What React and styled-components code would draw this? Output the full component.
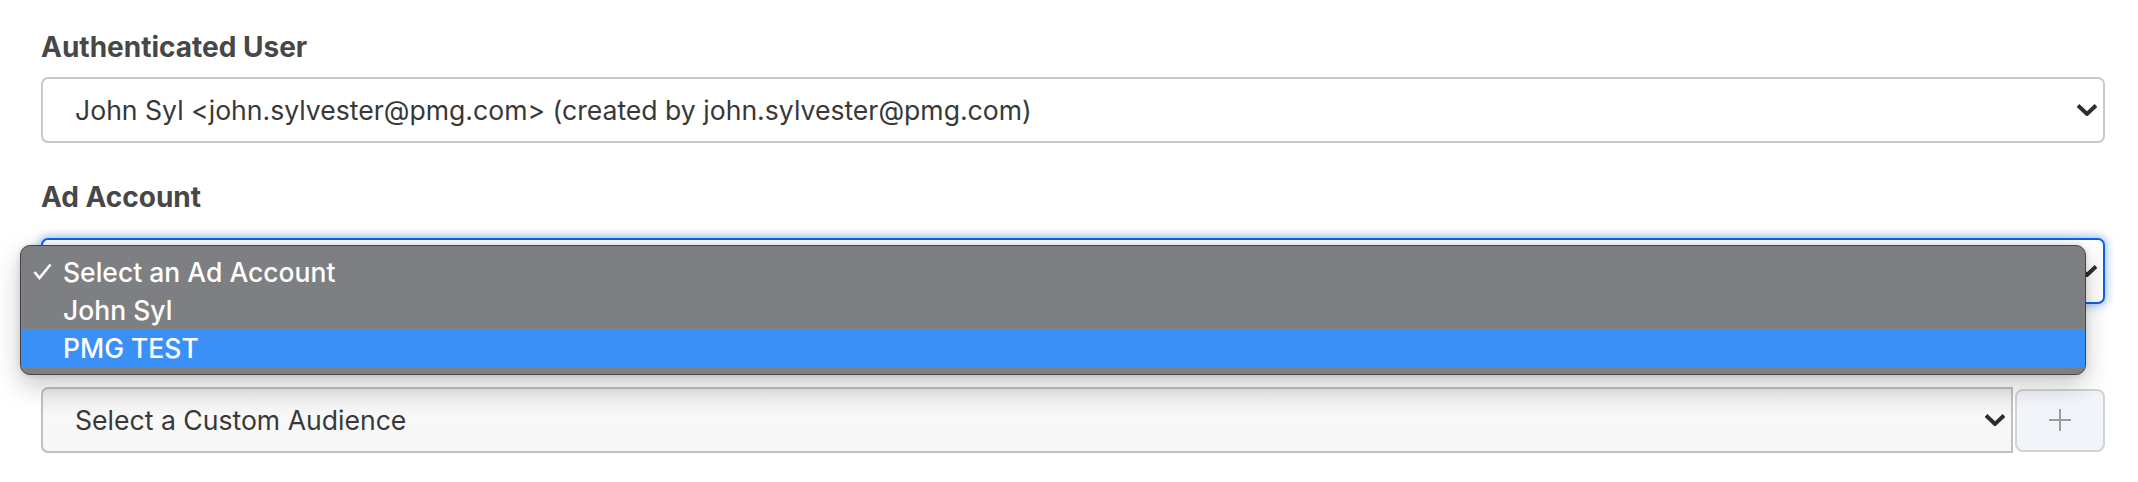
import React from "react";
import styled, { createGlobalStyle } from "styled-components";

const GlobalStyle = createGlobalStyle`
  html, body {
    margin: 0;
    padding: 0;
    background: #ffffff;
    overflow: hidden;
  }
  body {
    font-family: Inter, "Liberation Sans", Arial, sans-serif;
  }
`;

// Form column
const Page = styled.div`
  display: flex;
  flex-direction: column;
  gap: 37.5px;
  padding: 31px 33px 0 41px;
  width: 2138px;
  box-sizing: border-box;
`;

const Field = styled.div`
  display: flex;
  flex-direction: column;
`;

const Label = styled.div`
  font-size: 28px;
  line-height: 32px;
  font-weight: 700;
  color: #474747;
  margin-bottom: ${(p) => p.$gap || 14}px;
`;

const ControlWrap = styled.div`
  position: relative;
`;

const InputGroup = styled.div`
  display: flex;
  align-items: center;
  gap: 2px;
`;

// Select look-alike
const SelectBox = styled.div`
  flex: 1 1 auto;
  min-width: 0;
  display: flex;
  align-items: center;
  justify-content: space-between;
  height: 66px;
  box-sizing: border-box;
  padding: 0 6px 0 32px;
  border: 2px solid ${(p) => (p.$focused ? "#0d63e0" : p.$muted ? "#bfbfbf" : "#c9c9c9")};
  border-radius: ${(p) => (p.$attached ? "7px 0 0 7px" : "7px")};
  background: ${(p) =>
    p.$muted ? "linear-gradient(#ececec, #f8f8f8 45%, #f7f7f7)" : "#ffffff"};
  box-shadow: ${(p) => (p.$focused ? "0 0 9px 2px rgba(40, 120, 235, 0.45)" : "none")};
  font-size: 26.6px;
  color: #383838;
  white-space: nowrap;
`;

const Chevron = () => (
  <svg width="20" height="12" viewBox="0 0 20 12">
    <path d="M1 1.5 L10 10 L19 1.5" fill="none" stroke="#2e2e2e" strokeWidth="4" />
  </svg>
);

const AddButton = styled.div`
  flex: 0 0 90px;
  height: 63px;
  box-sizing: border-box;
  border: 2px solid #d3d3d3;
  border-radius: 8px;
  background: #f1f4f9;
  display: flex;
  align-items: center;
  justify-content: center;
`;

const Plus = () => (
  <svg width="24" height="24" viewBox="0 0 24 24">
    <path d="M12 1 V23 M1 12 H23" stroke="#9c9c9c" strokeWidth="2" />
  </svg>
);

// Native-style option menu laid over the focused select
const Menu = styled.div`
  position: absolute;
  top: 7px;
  left: -21px;
  width: 2066px;
  box-sizing: border-box;
  padding: 7px 0;
  background: #7e7f82;
  border: 1px solid #454545;
  border-radius: 10px;
  box-shadow: 0 10px 26px rgba(0, 0, 0, 0.22), 0 0 6px rgba(0, 0, 0, 0.12);
  z-index: 5;
`;

const Option = styled.div`
  display: flex;
  align-items: center;
  height: 38px;
  padding-left: 12px;
  background: ${(p) => (p.$active ? "#3b90f8" : "transparent")};
  color: #ffffff;
  font-size: 26.5px;
  font-weight: 500;
  line-height: 38px;
`;

const Check = styled.span`
  width: 30px;
  display: flex;
  align-items: center;
`;

const CheckMark = () => (
  <svg width="19" height="17" viewBox="0 0 19 17">
    <path d="M1.5 9 L6.5 15 L17.5 1.5" fill="none" stroke="#ffffff" strokeWidth="2.6" />
  </svg>
);

const options = [
  { label: "Select an Ad Account", checked: true },
  { label: "John Syl" },
  { label: "PMG TEST", active: true },
];

export default function App() {
  return (
    <>
      <GlobalStyle />
      <Page>
        <Field>
          <Label>Authenticated User</Label>
          <SelectBox>
            <span>John Syl &lt;john.sylvester@pmg.com&gt; (created by john.sylvester@pmg.com)</span>
            <Chevron />
          </SelectBox>
        </Field>

        <Field>
          <Label $gap={25}>Ad Account</Label>
          <ControlWrap>
            <SelectBox $focused>
              <span>Select an Ad Account</span>
              <Chevron />
            </SelectBox>
            <Menu>
              {options.map((o) => (
                <Option key={o.label} $active={o.active}>
                  <Check>{o.checked && <CheckMark />}</Check>
                  {o.label}
                </Option>
              ))}
            </Menu>
          </ControlWrap>
        </Field>

        <Field>
          <Label>Custom Audience</Label>
          <InputGroup>
            <SelectBox $muted $attached>
              <span>Select a Custom Audience</span>
              <Chevron />
            </SelectBox>
            <AddButton>
              <Plus />
            </AddButton>
          </InputGroup>
        </Field>
      </Page>
    </>
  );
}
